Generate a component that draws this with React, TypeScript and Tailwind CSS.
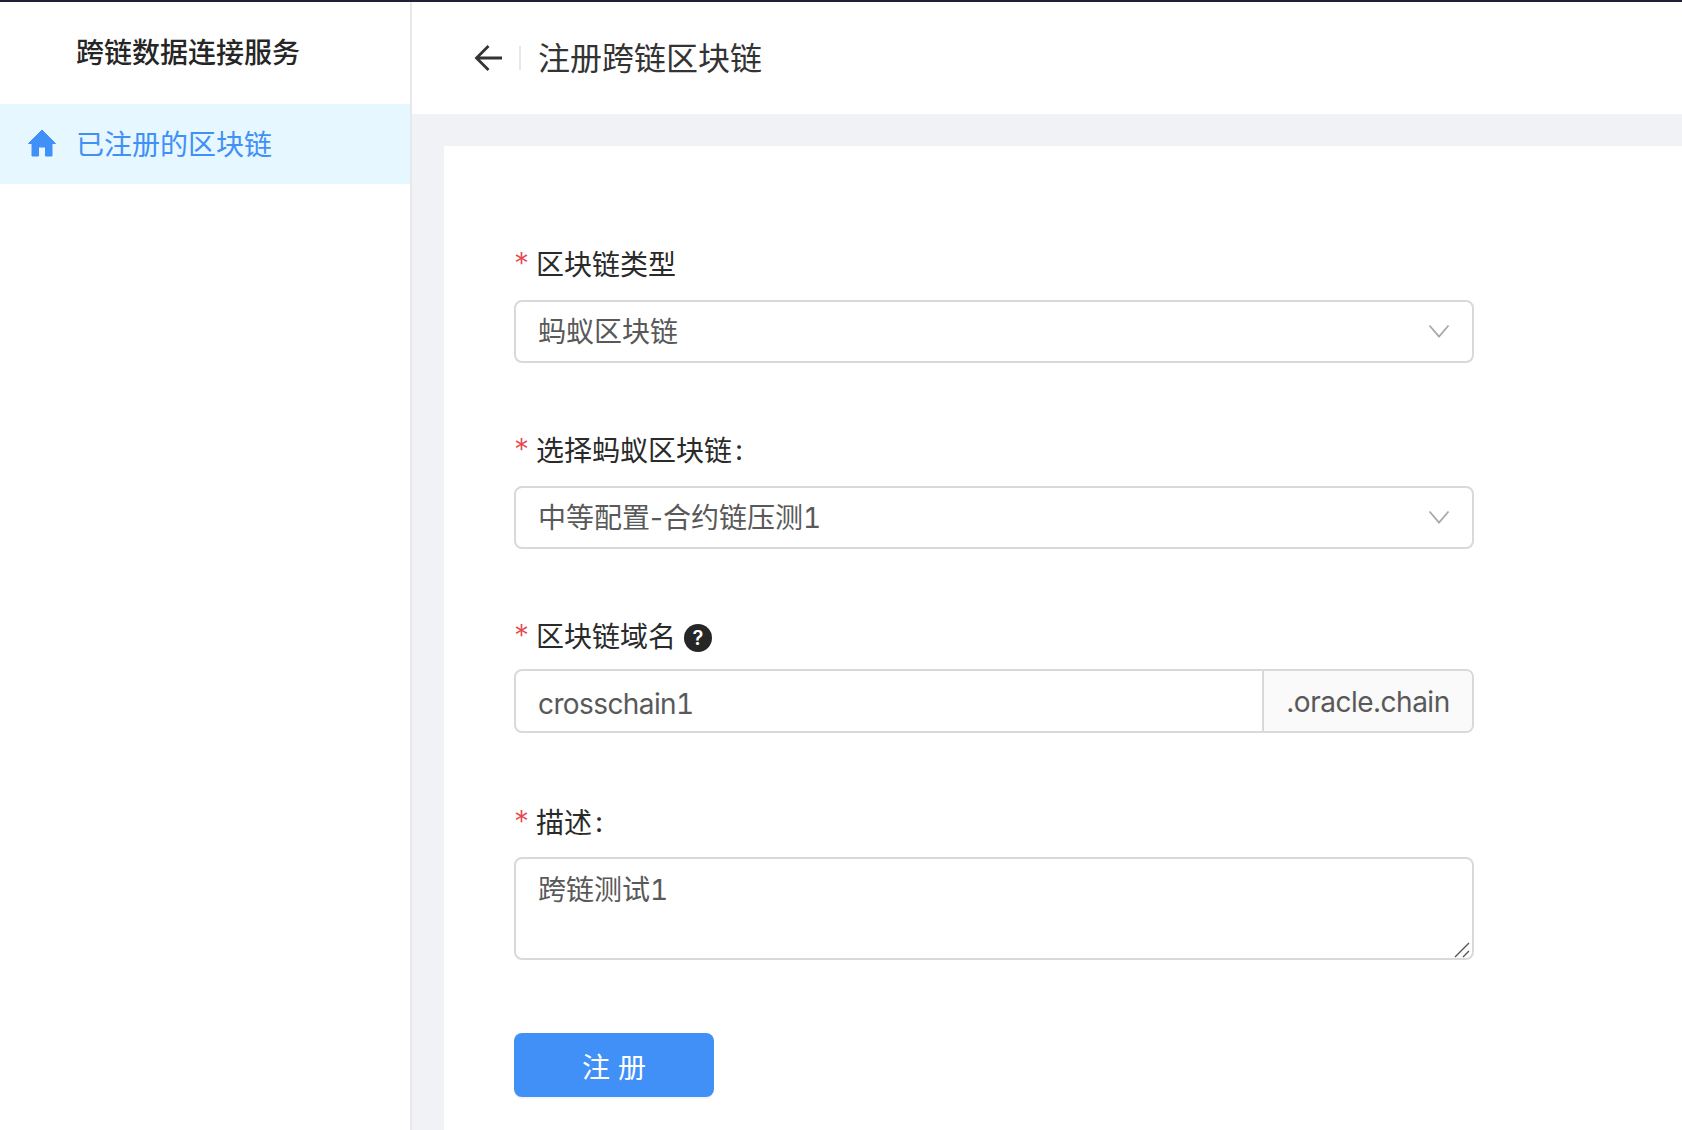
const sans = "font-['Inter','Noto_Sans_CJK_SC',sans-serif]";

function Field({ label, colon, help, gap, children, className }: { label: string; colon?: boolean; help?: boolean; gap: string; children: React.ReactNode; className: string }) {
  return (
    <div className={className}>
      <div className={`flex h-[44px] items-center ${gap}`}>
        <span className="w-[22px] shrink-0 pb-[2px] text-[30px] font-light leading-none text-[#e5484d]">*</span>
        <span className="pt-[1px] text-[28px] leading-[44px] text-[#2a2a2a]">{label}</span>
        {colon && <span className="ml-[3px] text-[28px] leading-[44px] text-[#2a2a2a]">:</span>}
        {help && (
          <span className="ml-[8px] mt-[3px] flex h-[28px] w-[28px] items-center justify-center rounded-full bg-[#262626] text-[20px] font-semibold leading-none text-white">?</span>
        )}
      </div>
      {children}
    </div>
  );
}

function Chevron() {
  return (
    <svg className="-mt-[2px]" width="22" height="14" viewBox="0 0 22 14" fill="none" stroke="#a8a8a8" strokeWidth="1.8">
      <path d="M1.5 1.5 L11 12.5 L20.5 1.5" />
    </svg>
  );
}

function SelectBox({ children }: { children: React.ReactNode }) {
  return (
    <div className="flex h-[63px] items-center justify-between rounded-[8px] border-2 border-[#d9d9d9] bg-white pl-[22px] pr-[22px] text-[28px] text-[#595959]">
      <span>{children}</span>
      <Chevron />
    </div>
  );
}

export default function App() {
  return (
    <div className={`${sans} flex h-[1130px] w-full flex-col overflow-hidden bg-[#f0f2f5]`}>
      <div className="h-[2px] shrink-0 bg-[#1f2233]" />
      <div className="flex min-h-0 flex-1">
        <aside className="w-[412px] shrink-0 border-r-2 border-[#e8e8e8] bg-white">
          <div className="flex h-[102px] items-center pl-[76px] text-[28px] font-medium text-[#262626]">跨链数据连接服务</div>
          <div className="flex h-[80px] items-center bg-[#e6f7ff] pl-[28px] text-[28px] text-[#4090f7]">
            <svg className="-ml-[1px] -mt-[2px]" width="30" height="28" viewBox="0 0 29 28" fill="#4090f7" stroke="#4090f7" strokeWidth="1" strokeLinejoin="round">
              <path d="M14.5 1 L28 14.5 L24.5 14.5 L24.5 27 L18 27 L18 18 L11 18 L11 27 L4.5 27 L4.5 14.5 L1 14.5 Z" />
            </svg>
            <span className="ml-[19px] pt-[1px]">已注册的区块链</span>
          </div>
        </aside>
        <main className="flex min-w-0 flex-1 flex-col">
          <header className="flex h-[112px] shrink-0 items-center bg-white pl-[62px]">
            <svg width="30" height="28" viewBox="0 0 30 28" fill="none" stroke="#333" strokeWidth="2.8">
              <path d="M28 14 H3 M14.5 2 L2.5 14 L14.5 26" />
            </svg>
            <span className="ml-[15px] h-[24px] w-[2px] bg-[#e8e8e8]" />
            <span className="ml-[17px] pt-[2px] text-[32px] text-[#333]">注册跨链区块链</span>
          </header>
          <div className="min-h-0 flex-1 pl-[32px] pt-[32px]">
            <div className="h-full bg-white pl-[70px] pt-[96px]">
              <div className="w-[960px]">
                <Field label="区块链类型" gap="mb-[14px]" className="">
                  <SelectBox>蚂蚁区块链</SelectBox>
                </Field>
                <Field label="选择蚂蚁区块链" colon gap="mb-[14px]" className="mt-[65px]">
                  <SelectBox>中等配置-合约链压测<span className="tabular-nums">1</span></SelectBox>
                </Field>
                <Field label="区块链域名" help gap="mb-[11px]" className="mt-[65px]">
                  <div className="flex h-[64px] rounded-[8px] border-2 border-[#d9d9d9] text-[28px] text-[#595959]">
                    <div className="flex flex-1 items-center pl-[22px] pt-[6px] tracking-[-0.6px] tabular-nums">crosschain1</div>
                    <div className="flex w-[210px] items-center justify-center rounded-r-[6px] border-l-2 border-[#d9d9d9] bg-[#fafafa] pt-[2px] tracking-[-0.5px]">.oracle.chain</div>
                  </div>
                </Field>
                <Field label="描述" colon gap="mb-[13px]" className="mt-[67px]">
                  <div className="relative h-[103px] rounded-[8px] border-2 border-[#d9d9d9] pl-[22px] pt-[10px] text-[28px] text-[#595959]">
                    跨链测试<span className="tabular-nums">1</span>
                    <svg className="absolute bottom-0 right-[2px]" width="16" height="16" viewBox="0 0 16 16" fill="none" stroke="#555" strokeWidth="1.4">
                      <path d="M1 15 L15 1 M9 15 L15 9" />
                    </svg>
                  </div>
                </Field>
                <button className="mt-[73px] h-[64px] w-[200px] rounded-[8px] bg-[#4090f7] pt-[5px] text-[28px] text-white shadow-[0_2px_0_rgba(0,0,0,0.04)]">注 册</button>
              </div>
            </div>
          </div>
        </main>
      </div>
    </div>
  );
}
